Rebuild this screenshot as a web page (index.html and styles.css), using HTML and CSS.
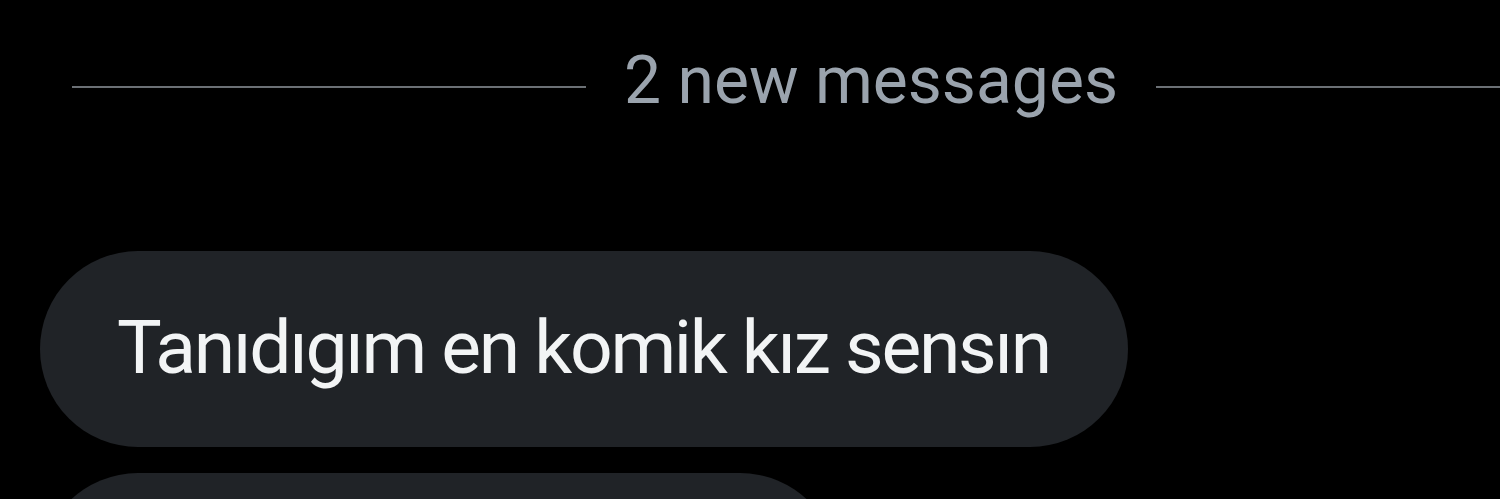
FILE: index.html
```html
<!DOCTYPE html>
<html lang="tr">
<head>
<meta charset="utf-8">
<title>Messages</title>
<link rel="stylesheet" href="styles.css">
</head>
<body>
<main class="chat">
  <div class="divider">
    <span class="divider-line"></span>
    <span class="divider-text">2 new messages</span>
    <span class="divider-line"></span>
  </div>
  <div class="messages">
    <div class="bubble"><span class="bubble-text">Tanıdıgım en komik kız sensın</span></div>
    <div class="bubble bubble-short"></div>
  </div>
</main>
</body>
</html>
```
FILE: styles.css
```css
html, body {
  margin: 0;
  padding: 0;
  background: #000;
  height: 499px;
  overflow: hidden;
}
.chat {
  font-family: Roboto, "Noto Sans", sans-serif;
}
.divider {
  display: flex;
  align-items: center;
  box-sizing: border-box;
  width: 1670px;
  padding: 48px 0 0 72px;
  height: 114px;
}
.divider-line {
  flex: 1;
  height: 2px;
  background: #6b7075;
  margin-top: 12px;
}
.divider-text {
  font-size: 66px;
  line-height: 1;
  color: #9aa3ad;
  padding: 0 38px;
  white-space: nowrap;
}
.messages {
  display: flex;
  flex-direction: column;
  align-items: flex-start;
  gap: 26px;
  padding: 137px 0 0 40px;
}
.bubble {
  display: flex;
  align-items: center;
  box-sizing: border-box;
  height: 196px;
  width: 1088px;
  padding: 0 0 4px 77px;
  border-radius: 98px;
  background: #202327;
}
.bubble-short {
  width: 798px;
}
.bubble-text {
  font-size: 75px;
  line-height: 1;
  letter-spacing: -2.3px;
  color: #f2f4f5;
  white-space: nowrap;
}
```
